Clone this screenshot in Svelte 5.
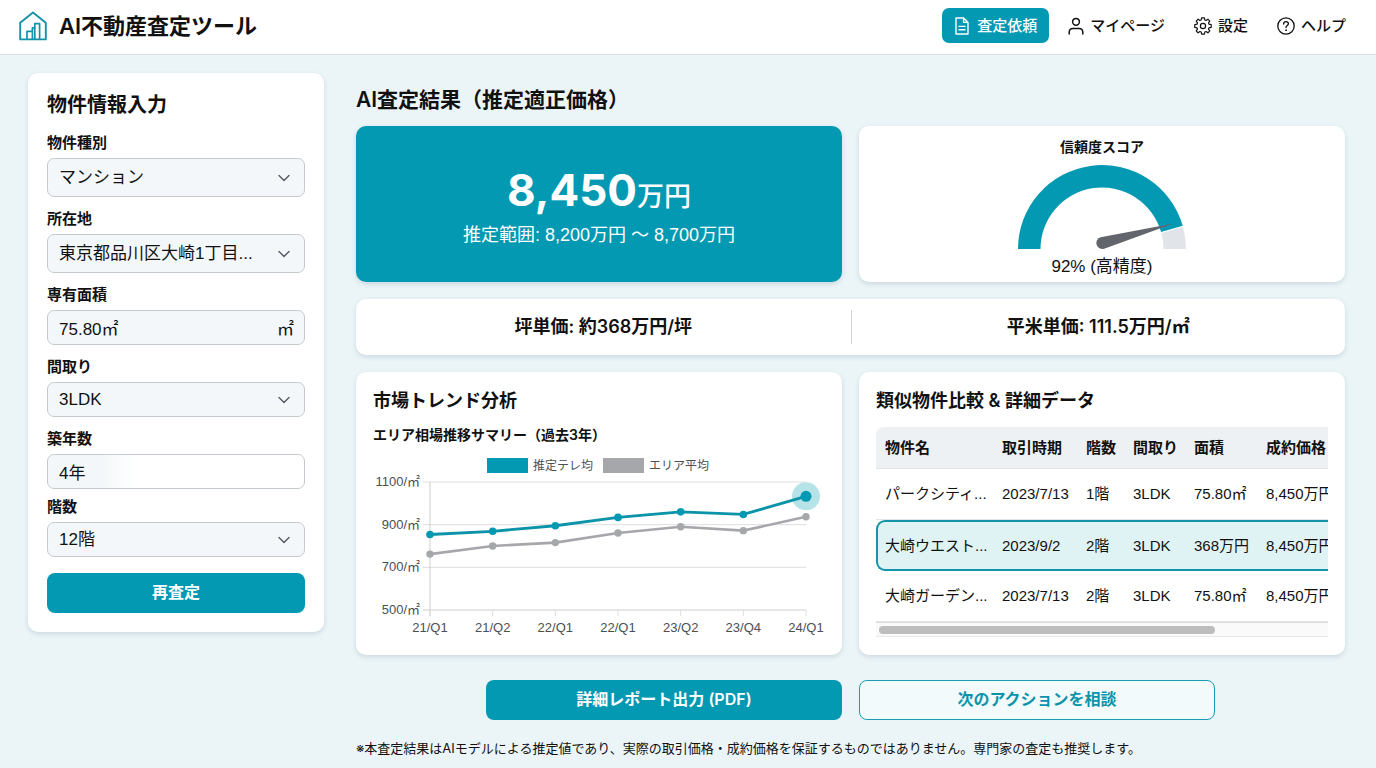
<script>
  const trend = [
    { label: '21/Q1', estimate: 854, area: 762 },
    { label: '21/Q2', estimate: 869, area: 800 },
    { label: '22/Q1', estimate: 895, area: 816 },
    { label: '22/Q1', estimate: 934, area: 861 },
    { label: '23/Q2', estimate: 960, area: 890 },
    { label: '23/Q4', estimate: 948, area: 872 },
    { label: '24/Q1', estimate: 1033, area: 937 },
  ];
  const ticks = [1100, 900, 700, 500];
  const plot = { left: 57, right: 433, top: 27, bottom: 155 };
  const px = (i) => plot.left + (i * (plot.right - plot.left)) / (trend.length - 1);
  const py = (v) => plot.bottom - ((v - 500) / 600) * (plot.bottom - plot.top);
  const line = (key) => trend.map((d, i) => `${px(i)},${py(d[key])}`).join(' ');

  const columns = ['物件名', '取引時期', '階数', '間取り', '面積', '成約価格'];
  const rows = [
    { cells: ['パークシティ...', '2023/7/13', '1階', '3LDK', '75.80㎡', '8,450万円'] },
    { cells: ['大崎ウエスト...', '2023/9/2', '2階', '3LDK', '368万円', '8,450万円'], selected: true },
    { cells: ['大崎ガーデン...', '2023/7/13', '2階', '3LDK', '75.80㎡', '8,450万円'] },
  ];

  let area = $state('75.80㎡');
  let age = $state('4年');

  let viewWidth = $state(453);
  let scrollLeft = $state(0);
  const tableWidth = 600;
  let thumbWidth = $derived(Math.min(100, (viewWidth / tableWidth) * 100));
  let thumbLeft = $derived((scrollLeft / tableWidth) * 100);
</script>

{#snippet chevron()}
  <svg class="chevron" viewBox="0 0 14 14" width="14" height="14" aria-hidden="true">
    <path d="M2 4.5 7 9.5 12 4.5" fill="none" stroke="currentColor" stroke-width="1.4" stroke-linecap="round" stroke-linejoin="round" />
  </svg>
{/snippet}

<div class="page">
  <header>
    <div class="brand">
      <svg viewBox="0 0 28 30" width="28" height="30" fill="none" stroke="#1492a8" stroke-width="1.9" stroke-linejoin="round" aria-hidden="true">
        <path d="M1.2 28.4V11.8L14 1.4 26.8 11.8V28.4Z" />
        <path d="M8 28.2V20.4H13.4M13.4 28.2V16.8H15.8M15.8 28.2V12.6H20.6V28.2" stroke-width="1.7" />
      </svg>
      <h1>AI不動産査定ツール</h1>
    </div>
    <nav>
      <a href="#request" class="request">
        <svg viewBox="0 0 14 18" width="14" height="18" fill="none" stroke="currentColor" stroke-width="1.4" stroke-linejoin="round" stroke-linecap="round" aria-hidden="true">
          <path d="M1 1H8.6L13 5.4V17H1ZM8.6 1V5.4H13M4 9.4H10M4 12.8H10" />
        </svg>
        査定依頼
      </a>
      <a href="#mypage">
        <svg viewBox="0 0 16 18" width="16" height="18" fill="none" stroke="currentColor" stroke-width="1.5" stroke-linecap="round" aria-hidden="true">
          <circle cx="8" cy="4.8" r="3.4" />
          <path d="M1.2 17V15.4C1.2 12.8 2.8 11.4 5 11.4H11C13.2 11.4 14.8 12.8 14.8 15.4V17" />
        </svg>
        マイページ
      </a>
      <a href="#settings">
        <svg viewBox="0 0 18 18" width="18" height="18" fill="none" stroke="currentColor" stroke-width="1.2" stroke-linejoin="round" aria-hidden="true">
          <path d="M7.6 .8H10.4L10.8 3 12.1 3.5 13.9 2.2 15.8 4.1 14.5 5.9 15 7.2 17.2 7.6V10.4L15 10.8 14.5 12.1 15.8 13.9 13.9 15.8 12.1 14.5 10.8 15 10.4 17.2H7.6L7.2 15 5.9 14.5 4.1 15.8 2.2 13.9 3.5 12.1 3 10.8 .8 10.4V7.6L3 7.2 3.5 5.9 2.2 4.1 4.1 2.2 5.9 3.5 7.2 3Z" />
          <circle cx="9" cy="9" r="2.6" />
        </svg>
        設定
      </a>
      <a href="#help">
        <svg viewBox="0 0 18 18" width="18" height="18" fill="none" stroke="currentColor" stroke-width="1.3" stroke-linecap="round" aria-hidden="true">
          <circle cx="9" cy="9" r="8.2" />
          <path d="M6.6 7C6.6 5.5 7.6 4.6 9 4.6S11.4 5.5 11.4 6.8C11.4 8.6 9 8.6 9 10.6" />
          <circle cx="9" cy="13.2" r=".5" fill="currentColor" stroke-width=".8" />
        </svg>
        ヘルプ
      </a>
    </nav>
  </header>

  <div class="body">
    <form class="card panel" onsubmit={(e) => e.preventDefault()}>
      <h2>物件情報入力</h2>

      <label for="type">物件種別</label>
      <div class="field tall">
        <select id="type"><option>マンション</option></select>
        {@render chevron()}
      </div>

      <label for="place">所在地</label>
      <div class="field tall">
        <select id="place"><option>東京都品川区大崎1丁目...</option></select>
        {@render chevron()}
      </div>

      <label for="area">専有面積</label>
      <div class="field">
        <input id="area" type="text" bind:value={area} />
        <span class="unit">㎡</span>
      </div>

      <label for="layout">間取り</label>
      <div class="field">
        <select id="layout"><option>3LDK</option></select>
        {@render chevron()}
      </div>

      <label for="age">築年数</label>
      <div class="field plain">
        <input id="age" type="text" bind:value={age} />
      </div>

      <label for="floor">階数</label>
      <div class="field">
        <select id="floor"><option>12階</option></select>
        {@render chevron()}
      </div>

      <button type="submit" class="solid">再査定</button>
    </form>

    <main>
      <h2 class="result-title">AI査定結果（推定適正価格）</h2>

      <div class="pair">
        <section class="card price">
          <p class="amount">8,450<span>万円</span></p>
          <p class="range">推定範囲: 8,200万円 〜 8,700万円</p>
        </section>
        <section class="card score">
          <h3>信頼度スコア</h3>
          <svg viewBox="0 0 168 84" width="168" height="84" role="img" aria-label="92%">
            <path d="M0 84A84 84 0 0 1 164.7 60.8L143.1 67A61.5 61.5 0 0 0 22.5 84Z" fill="#0399b3" />
            <path d="M165 61.8A84 84 0 0 1 168 84H145.5A61.5 61.5 0 0 0 143.4 68Z" fill="#e1e5ea" />
            <path d="M82.6 72.2 155.5 58.6 86.2 83.7A6 6 0 1 1 82.6 72.2Z" fill="#62666c" />
          </svg>
          <p>92% (高精度)</p>
        </section>
      </div>

      <section class="card units">
        <p>坪単価: 約368万円/坪</p>
        <p>平米単価: 111.5万円/㎡</p>
      </section>

      <div class="pair">
        <section class="card block">
          <h3>市場トレンド分析</h3>
          <h4>エリア相場推移サマリー（過去3年）</h4>
          <svg class="chart" viewBox="0 0 452 184" role="img" aria-label="エリア相場推移サマリー">
            <rect x="114" y="3" width="41" height="15" fill="#0399b3" />
            <text x="160" y="15" class="legend">推定テレ均</text>
            <rect x="230" y="3" width="41" height="15" fill="#a5a7ab" />
            <text x="276" y="15" class="legend">エリア平均</text>
            {#each ticks as t}
              <line x1="50" x2={plot.right} y1={py(t)} y2={py(t)} class:base={t === 500} class="grid" />
              <text x="47" y={py(t) + 4} text-anchor="end">{t}/㎡</text>
            {/each}
            <line x1={plot.left} x2={plot.left} y1={plot.top} y2="161" class="grid base" />
            {#each trend as d, i}
              <line x1={px(i)} x2={px(i)} y1="155" y2="161" class="grid" />
              <text x={px(i)} y="177" text-anchor="middle">{d.label}</text>
            {/each}
            <circle cx={px(6)} cy={py(trend[6].estimate)} r="14" fill="#b5e3e7" />
            <polyline points={line('area')} fill="none" stroke="#a5a7ab" stroke-width="2.6" />
            <polyline points={line('estimate')} fill="none" stroke="#0b93a9" stroke-width="2.8" />
            {#each trend as d, i}
              <circle cx={px(i)} cy={py(d.area)} r="3.7" fill="#a5a7ab" />
              <circle cx={px(i)} cy={py(d.estimate)} r={i === 6 ? 5.5 : 3.8} fill="#0399b3" />
            {/each}
          </svg>
        </section>

        <section class="card block">
          <h3>類似物件比較 &amp; 詳細データ</h3>
          <div class="scroller" bind:clientWidth={viewWidth} onscroll={(e) => (scrollLeft = e.currentTarget.scrollLeft)}>
            <table>
              <thead>
                <tr>
                  {#each columns as c}<th scope="col">{c}</th>{/each}
                </tr>
              </thead>
              <tbody>
                {#each rows as r}
                  <tr class:selected={r.selected}>
                    {#each r.cells as c}<td>{c}</td>{/each}
                  </tr>
                {/each}
              </tbody>
            </table>
          </div>
          <div class="track">
            <div class="thumb" style="width: {thumbWidth}%; margin-left: {thumbLeft}%"></div>
          </div>
        </section>
      </div>

      <div class="actions">
        <button type="button" class="solid">詳細レポート出力 (PDF)</button>
        <button type="button" class="outline">次のアクションを相談</button>
      </div>

      <p class="note">※本査定結果はAIモデルによる推定値であり、実際の取引価格・成約価格を保証するものではありません。専門家の査定も推奨します。</p>
    </main>
  </div>
</div>

<style>
  :global(body) {
    background: #ebf5f8;
  }
  .page,
  .page button {
    font-family: Inter, 'Noto Sans CJK JP', sans-serif;
    color: #111;
  }
  .field select,
  .field input,
  .unit,
  .range,
  .score p,
  .chart text,
  td {
    font-family: 'Liberation Sans', 'Noto Sans CJK JP', sans-serif;
    color: #111;
  }
  .page * {
    box-sizing: border-box;
  }
  h1, h2, h3, h4, p {
    margin: 0;
    font-weight: 600;
  }

  header {
    display: flex;
    justify-content: space-between;
    align-items: center;
    height: 55px;
    padding: 0 30px 3px 19px;
    background: #fff;
    border-bottom: 1px solid #d8e0e4;
  }
  .brand {
    display: flex;
    align-items: center;
    gap: 12px;
  }
  h1 {
    font-size: 22px;
    line-height: 32px;
  }
  nav {
    display: flex;
    align-items: center;
    gap: 29px;
  }
  nav a {
    display: flex;
    align-items: center;
    gap: 6px;
    font-size: 15px;
    font-weight: 500;
    line-height: 24px;
    color: #111;
    text-decoration: none;
  }
  nav .request {
    gap: 8px;
    height: 35px;
    margin-right: -10px;
    padding: 0 12px 0 13px;
    border-radius: 7px;
    background: #0399b3;
    color: #fff;
  }

  .body {
    display: grid;
    grid-template-columns: 296px minmax(0, 1fr);
    gap: 32px;
    align-items: start;
    padding: 18px 31px 8px 28px;
  }
  .card {
    border-radius: 10px;
    background: #fff;
    box-shadow: 0 2px 5px rgba(40, 70, 85, 0.16);
  }

  .panel {
    display: flex;
    flex-direction: column;
    padding: 17px 19px 19px;
  }
  .panel h2 {
    margin-bottom: 10px;
    font-size: 20px;
    line-height: 30px;
  }
  label {
    margin-bottom: 2px;
    font-size: 15px;
    font-weight: 600;
    line-height: 26px;
  }
  .field {
    display: flex;
    align-items: center;
    position: relative;
    height: 35px;
    margin-bottom: 9px;
    border: 1px solid #c4cad0;
    border-radius: 7px;
    background: #f3f7f9;
  }
  .tall {
    height: 39px;
  }
  .plain {
    margin-bottom: 5px;
    background: linear-gradient(to right, #f3f7f9 20%, #fff 35%);
  }
  .field select,
  .field input {
    flex: 1;
    min-width: 0;
    height: 100%;
    margin: 0;
    padding: 0 11px;
    border: 0;
    border-radius: 7px;
    background: transparent;
    appearance: none;
    font-size: 17px;
  }
  .chevron {
    position: absolute;
    right: 13px;
    color: #555b62;
    pointer-events: none;
  }
  .unit {
    padding-right: 10px;
    font-size: 17px;
  }
  button {
    height: 40px;
    padding: 0 16px 2px;
    border-radius: 8px;
    font-size: 16px;
    font-weight: 600;
    line-height: 24px;
    cursor: pointer;
  }
  .page .solid {
    border: 0;
    background: #0399b3;
    color: #fff;
  }
  .page .outline {
    border: 1px solid #1c9ab0;
    background: #f3fafb;
    color: #0b93a9;
  }
  .panel .solid {
    margin-top: 7px;
  }

  main {
    display: flex;
    flex-direction: column;
    gap: 17px;
  }
  .result-title {
    margin: 11px 0 -6px;
    font-size: 21px;
    line-height: 31px;
  }
  .pair {
    display: grid;
    grid-template-columns: repeat(2, minmax(0, 1fr));
    gap: 17px;
  }
  .price,
  .score {
    display: flex;
    flex-direction: column;
    align-items: center;
    min-height: 156px;
  }
  .price {
    justify-content: center;
    background: #0399b3;
    color: #fff;
  }
  .amount {
    font-size: 44px;
    font-weight: 700;
    line-height: 54px;
  }
  .amount span {
    font-size: 27px;
    font-weight: 500;
  }
  .page .range {
    font-size: 18px;
    font-weight: 400;
    line-height: 22px;
    color: #fff;
  }
  .score {
    padding-top: 10px;
  }
  .score h3 {
    margin-bottom: 7px;
    font-size: 14px;
    line-height: 22px;
  }
  .score p {
    margin-top: 6px;
    font-size: 17px;
    font-weight: 400;
    line-height: 24px;
  }

  .units {
    display: grid;
    grid-template-columns: repeat(2, minmax(0, 1fr));
    padding: 11px 0;
  }
  .units p {
    font-size: 18px;
    line-height: 34px;
    text-align: center;
  }
  .units p + p {
    border-left: 1px solid #cfd5da;
  }

  .block {
    padding: 15px 17px 16px;
  }
  .block h3 {
    font-size: 18px;
    line-height: 28px;
  }
  .block h4 {
    margin-top: 9px;
    font-size: 14px;
    line-height: 22px;
  }
  .chart {
    display: block;
    width: 100%;
    margin-top: 9px;
    overflow: visible;
  }
  .chart text {
    font-size: 13px;
    fill: #4b4f54;
  }
  .chart .legend {
    font-size: 12px;
  }
  .grid {
    stroke: #dcdee0;
    stroke-width: 1;
  }
  .base {
    stroke: #cbced1;
  }

  .scroller {
    margin-top: 12px;
    overflow-x: auto;
    scrollbar-width: none;
  }
  table {
    width: 600px;
    border-collapse: separate;
    border-spacing: 0;
    table-layout: fixed;
    font-size: 15px;
    line-height: 22px;
    text-align: left;
  }
  th,
  td {
    height: 51px;
    padding: 0 0 0 9px;
    border-bottom: 1px solid #e0e5e9;
    font-weight: 400;
    white-space: nowrap;
  }
  th {
    height: 42px;
    background: #eef1f4;
    font-weight: 600;
  }
  th:first-child {
    width: 117px;
    border-top-left-radius: 8px;
  }
  th:nth-child(2) {
    width: 84px;
  }
  th:nth-child(3) {
    width: 47px;
  }
  th:nth-child(4) {
    width: 61px;
  }
  th:nth-child(5) {
    width: 72px;
  }
  .selected td {
    border-top: 2px solid #1594a9;
    border-bottom: 2px solid #1594a9;
    background: #dff3f4;
  }
  .selected td:first-child {
    padding-left: 7px;
    border-left: 2px solid #1594a9;
    border-radius: 9px 0 0 9px;
  }
  .track {
    height: 15px;
    padding: 3px 3px 0;
    border-top: 1px solid #dcdcdc;
    border-bottom: 1px solid #e8e8e8;
    background: #fafafa;
  }
  .thumb {
    height: 8px;
    border-radius: 4px;
    background: #bdbdbd;
  }

  .actions {
    display: grid;
    grid-template-columns: repeat(2, 356px);
    gap: 17px;
    justify-content: center;
    margin-top: 8px;
  }
  .note {
    font-size: 13px;
    font-weight: 400;
    line-height: 22px;
  }
</style>
